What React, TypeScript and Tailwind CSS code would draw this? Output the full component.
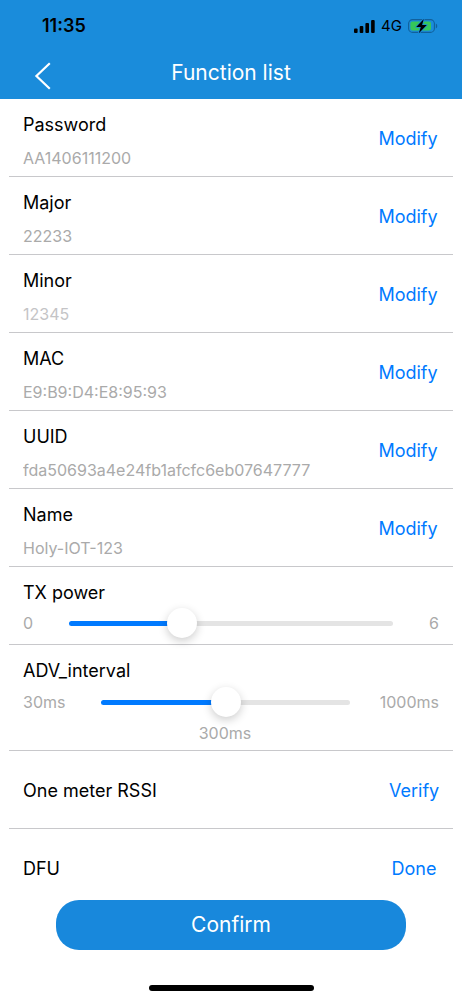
import { useState } from "react";

interface Field {
    id: string;
    label: string;
    value?: string;
    placeholder?: string;
}

const FIELDS: Field[] = [
    { id: "password", label: "Password", value: "AA1406111200" },
    { id: "major", label: "Major", value: "22233" },
    { id: "minor", label: "Minor", placeholder: "12345" },
    { id: "mac", label: "MAC", value: "E9:B9:D4:E8:95:93" },
    { id: "uuid", label: "UUID", value: "fda50693a4e24fb1afcfc6eb07647777" },
    { id: "name", label: "Name", value: "Holy-IOT-123" },
];

// selectable advertising intervals, in ms
const INTERVALS = [30, 100, 300, 500, 1000];

function StatusBar() {
    return (
        <div className="flex h-[52px] items-center justify-between pr-6 pl-[42px] text-black">
            <span className="text-lg leading-6 font-semibold">11:35</span>
            <div className="flex items-center gap-[6px]">
                <svg width="21" height="13" viewBox="0 0 21 13" fill="currentColor" aria-hidden="true">
                    <rect x="0" y="8.5" width="3.6" height="4.5" rx="1" />
                    <rect x="5.7" y="6" width="3.6" height="7" rx="1" />
                    <rect x="11.4" y="3" width="3.6" height="10" rx="1" />
                    <rect x="17.1" y="0" width="3.6" height="13" rx="1" />
                </svg>
                <span className="text-[15px] leading-6">4G</span>
                <svg width="30" height="16" viewBox="0 0 30 16" aria-hidden="true">
                    <rect x="0.6" y="1.6" width="25.8" height="12.8" rx="4" fill="none" stroke="#11609b" strokeWidth="1.1" />
                    <path d="M27.8 5.5c1.9.7 1.9 4.3 0 5z" fill="#11609b" />
                    <rect x="2.4" y="3.4" width="20.6" height="9.2" rx="2" fill="#35c759" />
                    <path
                        d="M15.8 1 8.2 9h4.6l-2 6.2 8-8.2h-4.7z"
                        fill="#000"
                        stroke="#1a8cdb"
                        strokeWidth="1.6"
                        strokeLinejoin="round"
                        paintOrder="stroke"
                    />
                </svg>
            </div>
        </div>
    );
}

function FieldRow({ field }: { field: Field }) {
    const [value, setValue] = useState(field.value ?? "");

    return (
        <div className="flex items-center justify-between border-b border-[#c8c8cb] px-[14px]">
            <div className="min-w-0 flex-1 pt-[13px] pb-[5px]">
                <label htmlFor={field.id} className="block text-lg leading-[26px]">
                    {field.label}
                </label>
                <input
                    id={field.id}
                    type="text"
                    value={value}
                    placeholder={field.placeholder}
                    onChange={(e) => setValue(e.target.value)}
                    className="mt-[7px] block h-[26px] w-full bg-transparent text-base leading-[26px] text-[#aaaaaa] outline-none placeholder:text-[#c4c4c6]"
                />
            </div>
            <button type="button" className="w-[62px] cursor-pointer pt-[2px] text-center text-lg leading-[26px] text-[#007aff]">
                Modify
            </button>
        </div>
    );
}

interface SliderProps {
    id: string;
    max: number;
    value: number;
    valueText: string;
    onChange: (value: number) => void;
}

function Slider({ id, max, value, valueText, onChange }: SliderProps) {
    const percent = (value / max) * 100;

    return (
        <input
            id={id}
            type="range"
            min={0}
            max={max}
            value={value}
            aria-valuetext={valueText}
            onChange={(e) => onChange(Number(e.target.value))}
            className="h-[5px] min-w-0 flex-1 cursor-pointer appearance-none rounded-full outline-none [&::-webkit-slider-thumb]:size-[30px] [&::-webkit-slider-thumb]:appearance-none [&::-webkit-slider-thumb]:rounded-full [&::-webkit-slider-thumb]:bg-white [&::-webkit-slider-thumb]:shadow-[0_3px_10px_rgba(0,0,0,0.2)]"
            style={{ background: `linear-gradient(to right, #007aff ${percent}%, #e4e4e4 ${percent}%)` }}
        />
    );
}

function ActionRow({ label, action }: { label: string; action: string }) {
    return (
        <div className="flex items-center justify-between border-b border-[#c8c8cb] px-[14px] pt-[27px] pb-6 text-lg leading-[26px] last:border-b-0 last:pb-[18px]">
            <span>{label}</span>
            <button type="button" className="w-[50px] cursor-pointer text-center text-[#007aff]">
                {action}
            </button>
        </div>
    );
}

export default function App() {
    const [power, setPower] = useState(2);
    const [interval, setInterval] = useState(2);

    return (
        <div className="flex min-h-screen flex-col bg-white font-[Inter,sans-serif] text-black">
            <header className="bg-[#1a8cdb]">
                <StatusBar />
                <div className="grid h-[47px] grid-cols-[1fr_auto_1fr] items-center pb-[6px]">
                    <button type="button" aria-label="Back" className="ml-[34px] w-6 cursor-pointer pt-[6px] text-white">
                        <svg width="18" height="28" viewBox="0 0 18 28" fill="none" stroke="currentColor" strokeWidth="2.2" aria-hidden="true">
                            <path d="M15.8 1.2 2.4 14l13.4 12.8" />
                        </svg>
                    </button>
                    <h1 className="text-[21px] leading-6 text-white">Function list</h1>
                </div>
            </header>

            <main className="px-[9px]">
                {FIELDS.map((field) => (
                    <FieldRow key={field.id} field={field} />
                ))}

                <div className="border-b border-[#c8c8cb] px-[14px] pt-[13px] pb-2">
                    <label htmlFor="tx-power" className="block text-lg leading-[26px]">
                        TX power
                    </label>
                    <div className="mt-1 flex items-center gap-9 text-base leading-[26px] text-[#aaaaaa]">
                        <span>0</span>
                        <Slider id="tx-power" max={6} value={power} valueText={String(power)} onChange={setPower} />
                        <span>6</span>
                    </div>
                </div>

                <div className="border-b border-[#c8c8cb] px-[14px] pt-[13px] pb-1">
                    <label htmlFor="adv-interval" className="block text-lg leading-[26px]">
                        ADV_interval
                    </label>
                    <div className="mt-[5px] flex items-center text-base leading-[26px] text-[#aaaaaa]">
                        <span className="mr-9">30ms</span>
                        <Slider
                            id="adv-interval"
                            max={INTERVALS.length - 1}
                            value={interval}
                            valueText={`${INTERVALS[interval]}ms`}
                            onChange={setInterval}
                        />
                        <span className="ml-[30px]">1000ms</span>
                    </div>
                    <output htmlFor="adv-interval" className="mt-[5px] block pr-3 text-center text-base leading-[26px] text-[#aaaaaa]">
                        {INTERVALS[interval]}ms
                    </output>
                </div>

                <ActionRow label="One meter RSSI" action="Verify" />
                <ActionRow label="DFU" action="Done" />
            </main>

            <button type="button" className="mx-14 h-[50px] cursor-pointer rounded-[23px] bg-[#1888dc] text-[21px] leading-6 text-white">
                Confirm
            </button>

            <div className="mx-auto mt-auto mb-[9px] h-[6px] w-[165px] rounded-full bg-black" />
        </div>
    );
}
